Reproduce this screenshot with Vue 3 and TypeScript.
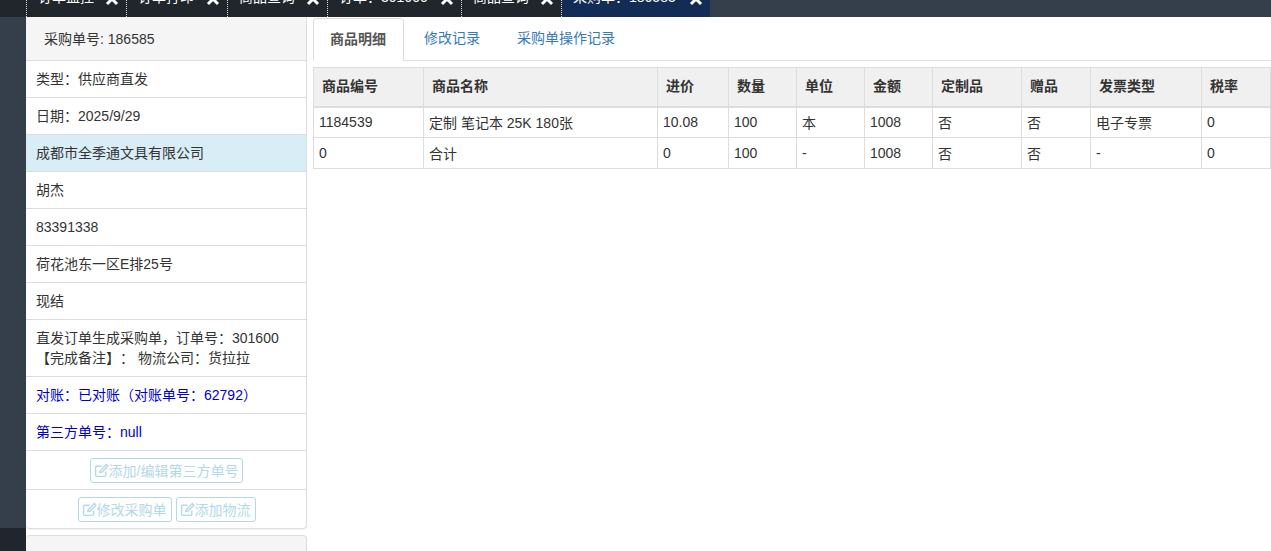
<script setup lang="ts">
const tabs = [
  { label: '订单监控', w: 100 },
  { label: '订单打印', w: 101 },
  { label: '商品查询', w: 100 },
  { label: '订单：301600', w: 134 },
  { label: '商品查询', w: 100 },
  { label: '采购单：186585', w: 149 },
]
const infoRows = [
  { t: '类型：供应商直发' },
  { t: '日期：2025/9/29' },
  { t: '成都市全季通文具有限公司', cls: 'hl' },
  { t: '胡杰' },
  { t: '83391338' },
  { t: '荷花池东一区E排25号' },
  { t: '现结' },
  { t: '直发订单生成采购单，订单号：301600\n【完成备注】： 物流公司：货拉拉', cls: 'multi' },
  { t: '对账：已对账（对账单号：62792）', cls: 'blue' },
  { t: '第三方单号：null', cls: 'blue' },
]
const cols = [
  { h: '商品编号', w: 110 }, { h: '商品名称', w: 234 }, { h: '进价', w: 71 }, { h: '数量', w: 68 },
  { h: '单位', w: 68 }, { h: '金额', w: 68 }, { h: '定制品', w: 89 }, { h: '赠品', w: 69 },
  { h: '发票类型', w: 111 }, { h: '税率', w: 69 },
]
const rows = [
  ['1184539', '定制 笔记本 25K 180张', '10.08', '100', '本', '1008', '否', '否', '电子专票', '0'],
  ['0', '合计', '0', '100', '-', '1008', '否', '否', '-', '0'],
]
</script>

<template>
  <div class="page">
    <div class="topbar">
      <div class="spacer"></div>
      <div v-for="(tab, i) in tabs" :key="i" class="tab" :class="{ active: i === tabs.length - 1 }" :style="{ width: tab.w + 'px' }">
        <span>{{ tab.label }}</span>
        <svg class="x" width="14" height="14" viewBox="0 0 14 14"><path d="M2 2 L12 12 M12 2 L2 12" stroke="#fff" stroke-width="3" /></svg>
      </div>
    </div>
    <div class="body">
      <div class="rail"><div class="rail-fill"></div><div class="rail-dark"></div></div>
      <div class="left">
        <div class="panel">
          <div class="panel-head">采购单号: 186585</div>
          <div v-for="(r, i) in infoRows" :key="i" class="row" :class="r.cls">{{ r.t }}</div>
          <div class="row btns tall">
            <button class="btn">
              <svg width="15" height="15" viewBox="0 0 14 14" fill="none" stroke="currentColor" stroke-width="1.3"><path d="M11 8v3.500a1 1 0 0 1-1 1H2.500a1 1 0 0 1-1-1V4a1 1 0 0 1 1-1H7" /><path d="M5.500 8.800 6 7 11.500 1.500 13 3 7.500 8.500Z" /></svg>添加/编辑第三方单号
            </button>
          </div>
          <div class="row btns tall last">
            <button class="btn">
              <svg width="15" height="15" viewBox="0 0 14 14" fill="none" stroke="currentColor" stroke-width="1.3"><path d="M11 8v3.500a1 1 0 0 1-1 1H2.500a1 1 0 0 1-1-1V4a1 1 0 0 1 1-1H7" /><path d="M5.500 8.800 6 7 11.500 1.500 13 3 7.500 8.500Z" /></svg>修改采购单
            </button>
            <button class="btn">
              <svg width="15" height="15" viewBox="0 0 14 14" fill="none" stroke="currentColor" stroke-width="1.3"><path d="M11 8v3.500a1 1 0 0 1-1 1H2.500a1 1 0 0 1-1-1V4a1 1 0 0 1 1-1H7" /><path d="M5.500 8.800 6 7 11.500 1.500 13 3 7.500 8.500Z" /></svg>添加物流
            </button>
          </div>
        </div>
        <div class="panel2"></div>
      </div>
      <div class="right">
        <div class="navtabs">
          <div class="nt on">商品明细</div>
          <div class="nt second">修改记录</div>
          <div class="nt third">采购单操作记录</div>
        </div>
        <table class="tbl">
          <colgroup><col v-for="c in cols" :key="c.h" :style="{ width: c.w + 'px' }" /></colgroup>
          <thead><tr><th v-for="c in cols" :key="c.h">{{ c.h }}</th></tr></thead>
          <tbody>
            <tr v-for="(r, i) in rows" :key="i"><td v-for="(v, j) in r" :key="j">{{ v }}</td></tr>
          </tbody>
        </table>
      </div>
    </div>
  </div>
</template>

<style>
html, body { margin: 0; background: #fff; overflow: hidden; }
</style>

<style scoped>
.page {
  width: 1271px; height: 551px; overflow: hidden;
  font-family: "Liberation Sans", "Noto Sans CJK SC", sans-serif;
  font-size: 14px; color: #333; background: #fff;
  text-spacing-trim: space-all;
}
.topbar { height: 17px; background: #343f4b; display: flex; align-items: flex-end; overflow: hidden; }
.spacer { width: 26px; height: 17px; background: #20262c; flex: none; }
.tab {
  flex: none; height: 17px; box-sizing: border-box; background: #20262c; color: #fff;
  border-left: 1px dotted #ddd; font-size: 14px; display: flex; align-items: flex-end; justify-content: space-between;
  padding: 0 7px 10px 11px; white-space: nowrap; line-height: 20px;
}
.tab.active { background: #132c55; }
.x { flex: none; margin-bottom: 1px; }
.body { display: flex; height: 534px; }
.rail { width: 26px; flex: none; display: flex; flex-direction: column; }
.rail-fill { height: 511px; background: #343f4b; }
.rail-dark { flex: 1; background: #20262c; }
.left { width: 281px; flex: none; }
.panel { border-right: 1px solid #ddd; border-bottom: 1px solid #ddd; border-radius: 0 0 4px 4px; box-shadow: 0 1px 1px rgba(0,0,0,.05); }
.panel-head { height: 44px; line-height: 44px; padding-left: 18px; background: #f5f5f5; border-bottom: 1px solid #ddd; box-sizing: border-box; }
.row { box-sizing: border-box; height: 37px; padding: 9px 10px 8px; line-height: 18px; border-bottom: 1px solid #ddd; white-space: pre-line; }
.row.hl { background: #d9edf7; }
.row.multi { height: 57px; padding-top: 8px; line-height: 20px; }
.row.blue { color: #0000cd; }
.btns { display: flex; justify-content: center; gap: 4px; padding: 7px 0 0 1px; }
.tall { height: 39px; }
.btns.last { border-bottom: 0; height: 38px; }
.btn {
  height: 25px; box-sizing: border-box; padding: 0 4px 0 3px; font: inherit; font-size: 14px; color: #b2d9e5;
  background: #fff; border: 1px solid #b2d9e5; border-radius: 3px; display: inline-flex; align-items: center;
}
.panel2 { margin-top: 6px; height: 40px; background: #f5f5f5; border: 1px solid #ddd; border-left: 0; border-radius: 4px; }
.right { flex: 1; padding-left: 6px; min-width: 0; }
.navtabs { display: flex; height: 44px; border-bottom: 1px solid #ddd; box-sizing: border-box; }
.nt { padding: 0 18px; line-height: 43px; color: #337ab7; height: 44px; box-sizing: border-box; }
.second { margin-left: 2px; }
.third { margin-left: 1px; }
.nt.on {
  color: #555; font-weight: 700; background: #fff; border: 1px solid #ddd; border-bottom-color: #fff;
  border-radius: 4px 4px 0 0; padding: 0 17px 0 16px; margin-top: 1px; height: 43px; line-height: 41px;
}
.tbl { margin-top: 6px; border-collapse: collapse; table-layout: fixed; width: 958px; }
th, td { border: 1px solid #ddd; text-align: left; font-size: 14px; box-sizing: border-box; }
th { height: 39px; background: #f0f0f0; border-bottom-width: 2px; padding: 0 8px 4px; font-weight: 700; }
td { height: 31px; padding: 0 5px; }
</style>
